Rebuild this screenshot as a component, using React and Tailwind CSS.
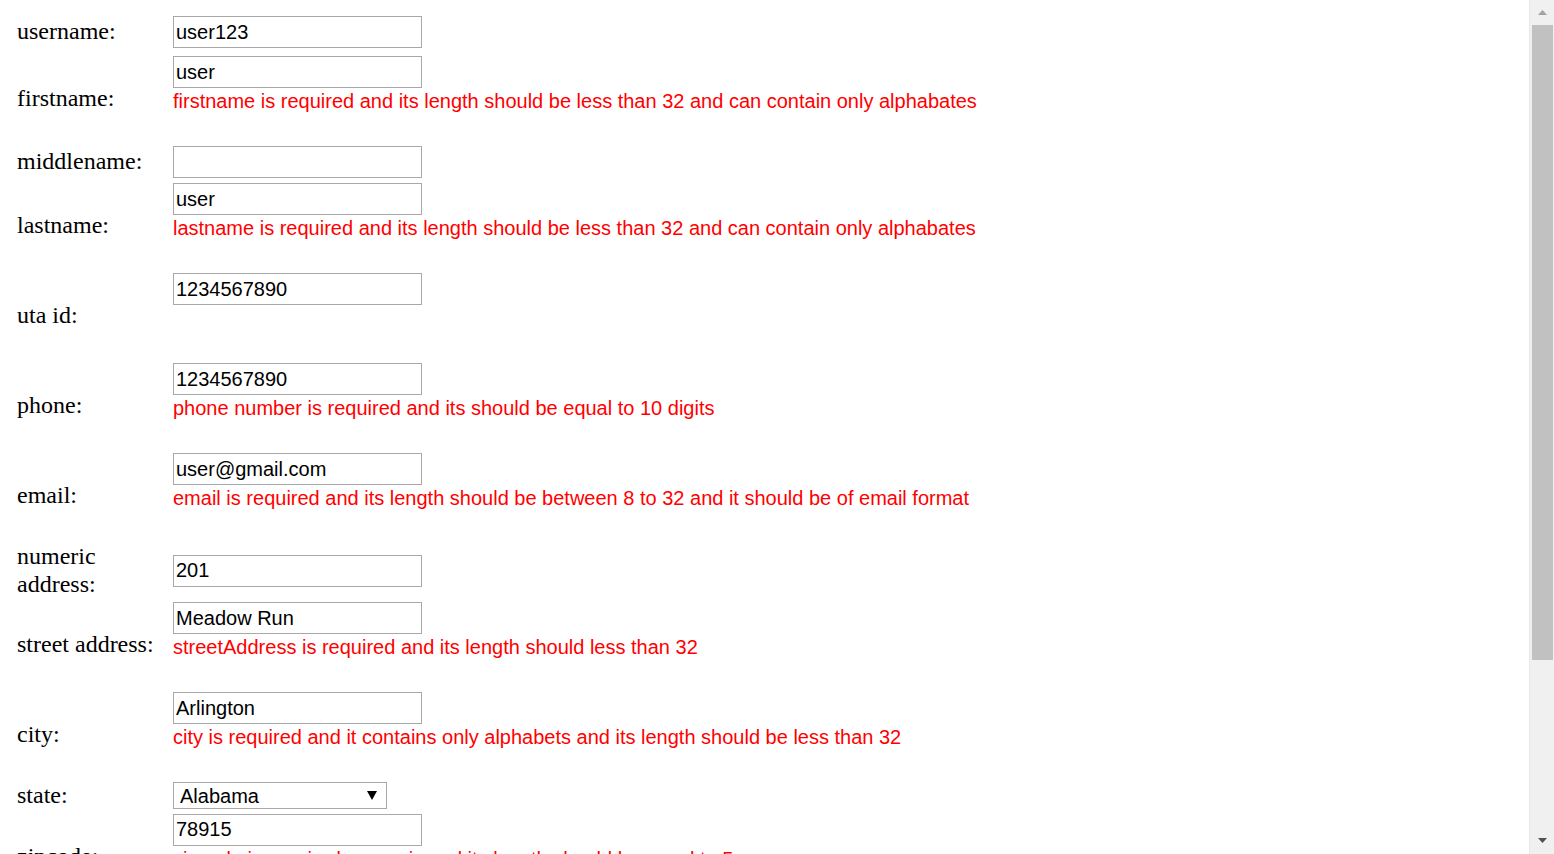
import React from "react"

const rows = [
  { label: "username:", value: "user123", mt: "mt-[16px]" },
  {
    label: "firstname:",
    value: "user",
    error:
      "firstname is required and its length should be less than 32 and can contain only alphabates",
    mt: "mt-[8px]",
  },
  { label: "middlename:", value: "", mt: "mt-[4px]" },
  {
    label: "lastname:",
    value: "user",
    error:
      "lastname is required and its length should be less than 32 and can contain only alphabates",
    mt: "mt-[5px]",
  },
  { label: "uta id:", value: "1234567890", error: "", mt: "mt-[4px]" },
  {
    label: "phone:",
    value: "1234567890",
    error: "phone number is required and its should be equal to 10 digits",
    mt: "mt-[4px]",
  },
  {
    label: "email:",
    value: "user@gmail.com",
    error:
      "email is required and its length should be between 8 to 32 and it should be of email format",
    mt: "mt-[4px]",
  },
  { label: "numeric address:", value: "201", mt: "mt-[4px]" },
  {
    label: "street address:",
    value: "Meadow Run",
    error: "streetAddress is required and its length should less than 32",
    mt: "mt-[4px]",
  },
  {
    label: "city:",
    value: "Arlington",
    error:
      "city is required and it contains only alphabets and its length should be less than 32",
    mt: "mt-[4px]",
  },
  { label: "state:", select: "Alabama", mt: "mt-[4px]" },
  {
    label: "zipcode:",
    value: "78915",
    error: "zipcode is required, numeric and its length should be equal to 5",
    mt: "mt-[4px]",
  },
]

const Field = ({ row }) => {
  if (row.select) {
    return (
      <div className="relative w-[214px] h-[27px]">
        <select
          defaultValue={row.select}
          className="appearance-none w-full h-full border border-[#a9a9a9] bg-white pl-[6px] text-[20px] leading-none text-black font-['Liberation_Sans',Arial,sans-serif] outline-none"
        >
          <option>Alabama</option>
          <option>Alaska</option>
          <option>Arizona</option>
          <option>Texas</option>
        </select>
        <svg
          className="absolute right-[10px] top-[9px] pointer-events-none"
          width="10"
          height="9"
          viewBox="0 0 10 9"
        >
          <polygon points="0,0 10,0 5,9" fill="#000" />
        </svg>
      </div>
    )
  }

  return (
    <div className="flex flex-col">
      <input
        type="text"
        defaultValue={row.value}
        className="w-[249px] h-[32px] border border-[#a9a9a9] bg-white px-[2px] text-[20px] text-black font-['Liberation_Sans',Arial,sans-serif] outline-none"
      />
      {row.error !== undefined && (
        <>
          <div className="h-[25px] leading-[27px] text-[20px] text-[#ff0000] whitespace-nowrap font-['Liberation_Sans',Arial,sans-serif]">
            {row.error}
          </div>
          <div className="h-[29px]"></div>
        </>
      )}
    </div>
  )
}

const Scrollbar = () => (
  <div className="w-[25px] h-screen shrink-0 bg-[#f0f0f0] border-l border-[#e8e8e8] flex flex-col items-center">
    <div className="h-[25px] w-full flex items-center justify-center">
      <svg width="9" height="5" viewBox="0 0 9 5">
        <polygon points="0,5 9,5 4.5,0" fill="#a3a3a3" />
      </svg>
    </div>
    <div className="w-[21px] h-[635px] bg-[#c1c1c1]"></div>
    <div className="flex-1"></div>
    <div className="h-[28px] w-full flex items-center justify-center">
      <svg width="9" height="5" viewBox="0 0 9 5">
        <polygon points="0,0 9,0 4.5,5" fill="#505050" />
      </svg>
    </div>
  </div>
)

const App = () => {
  return (
    <div className="flex h-screen w-full overflow-hidden bg-white">
      <div className="flex-1 overflow-hidden pl-[17px]">
        {rows.map((row) => (
          <div key={row.label} className={`flex items-center ${row.mt}`}>
            <div className="w-[156px] shrink-0 text-[24px] leading-[27.5px] text-black font-['Liberation_Serif','Times_New_Roman',serif]">
              {row.label}
            </div>
            <Field row={row} />
          </div>
        ))}
      </div>
      <Scrollbar />
    </div>
  )
}

export default App
